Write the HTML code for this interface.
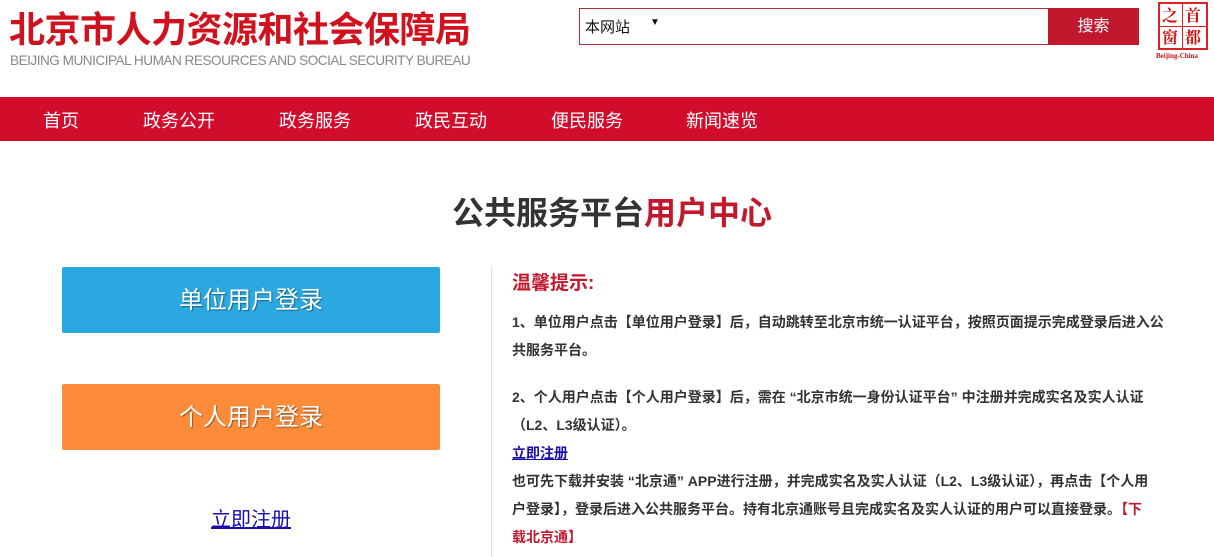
<!DOCTYPE html>
<html><head><meta charset="utf-8"><style>
*{margin:0;padding:0;box-sizing:border-box}
body{width:1214px;height:557px;overflow:hidden;background:#fff;font-family:"Liberation Sans","Noto Sans CJK SC",sans-serif;position:relative}
.a{position:absolute;white-space:nowrap}
.nav span{position:absolute;top:10px;color:#fff;font-size:18px}
.tip p{font-size:14px;font-weight:bold;color:#333;line-height:28px;white-space:nowrap}
</style></head><body>
<div class="a" style="left:9px;top:1px;font-size:36px;color:#d0121f;font-weight:bold;letter-spacing:-0.5px">北京市人力资源和社会保障局</div>
<div class="a" style="left:10px;top:53px;font-size:13.6px;color:#888;letter-spacing:-0.5px">BEIJING MUNICIPAL HUMAN RESOURCES AND SOCIAL SECURITY BUREAU</div>
<div class="a" style="left:579px;top:8px;width:470px;height:37px;border:1px solid #b0303c;background:#fff"></div>
<div class="a" style="left:585px;top:16px;font-size:15px;color:#111">本网站</div>
<div class="a" style="left:650px;top:17px;font-size:10px;color:#111">▼</div>
<div class="a" style="left:1048px;top:8px;width:91px;height:37px;background:#c0192e;color:#fff;font-size:16px;text-align:center;line-height:37px">搜索</div>
<div class="a" style="left:1158px;top:2px;width:50px;height:48px;border:2px solid #d22;">
<div style="position:absolute;left:22px;top:0;width:1px;height:44px;background:#d22"></div>
<div style="position:absolute;left:0;top:22px;width:46px;height:1px;background:#d22"></div>
<div style="position:absolute;left:2px;top:1px;font-size:16px;font-weight:bold;color:#c11;line-height:20px;font-family:'Noto Serif CJK SC',serif">之</div>
<div style="position:absolute;left:25px;top:1px;font-size:16px;font-weight:bold;color:#c11;line-height:20px;font-family:'Noto Serif CJK SC',serif">首</div>
<div style="position:absolute;left:2px;top:23px;font-size:16px;font-weight:bold;color:#c11;line-height:20px;font-family:'Noto Serif CJK SC',serif">窗</div>
<div style="position:absolute;left:25px;top:23px;font-size:16px;font-weight:bold;color:#c11;line-height:20px;font-family:'Noto Serif CJK SC',serif">都</div>
</div>
<div class="a" style="left:1156px;top:52px;font-size:7px;font-weight:bold;color:#c11;font-family:'Liberation Serif',serif">Beijing-China</div>
<div class="a nav" style="left:0;top:97px;width:1214px;height:44px;background:#d20c2b">
<span style="left:43px">首页</span><span style="left:143px">政务公开</span><span style="left:279px">政务服务</span><span style="left:415px">政民互动</span><span style="left:551px">便民服务</span><span style="left:686px">新闻速览</span>
</div>
<div class="a" style="left:452px;top:188px;font-size:32px;font-weight:bold;color:#333">公共服务平台<span style="color:#c0192e">用户中心</span></div>
<div class="a" style="left:62px;top:267px;width:378px;height:66px;background:#2ba8e0;border-radius:2px;color:#fff;font-size:24px;text-align:center;line-height:68px;text-shadow:1px 1px 1px rgba(0,0,0,.4)">单位用户登录</div>
<div class="a" style="left:62px;top:384px;width:378px;height:66px;background:#fd8c3a;border-radius:2px;color:#fff;font-size:24px;text-align:center;line-height:68px;text-shadow:1px 1px 1px rgba(0,0,0,.4)">个人用户登录</div>
<div class="a" style="left:211px;top:503px;font-size:20px;color:#1a0dab;text-decoration:underline">立即注册</div>
<div class="a" style="left:491px;top:267px;width:1px;height:290px;background:#ddd"></div>
<div class="a" style="left:512px;top:268px;font-size:19px;font-weight:bold;color:#c0192e">温馨提示:</div>
<div class="a tip" style="left:512px;top:308px;width:660px">
<p>1、单位用户点击【单位用户登录】后，自动跳转至北京市统一认证平台，按照页面提示完成登录后进入公</p>
<p>共服务平台。</p>
<p style="height:19px"></p>
<p>2、个人用户点击【个人用户登录】后，需在 “北京市统一身份认证平台” 中注册并完成实名及实人认证</p>
<p>（L2、L3级认证）。</p>
<p><a style="color:#1a0dab;text-decoration:underline">立即注册</a></p>
<p>也可先下载并安装 “北京通” APP进行注册，并完成实名及实人认证（L2、L3级认证），再点击【个人用</p>
<p>户登录】，登录后进入公共服务平台。持有北京通账号且完成实名及实人认证的用户可以直接登录。<span style="color:#c0192e">【下</span></p>
<p><span style="color:#c0192e">载北京通】</span></p>
</div>
</body></html>
